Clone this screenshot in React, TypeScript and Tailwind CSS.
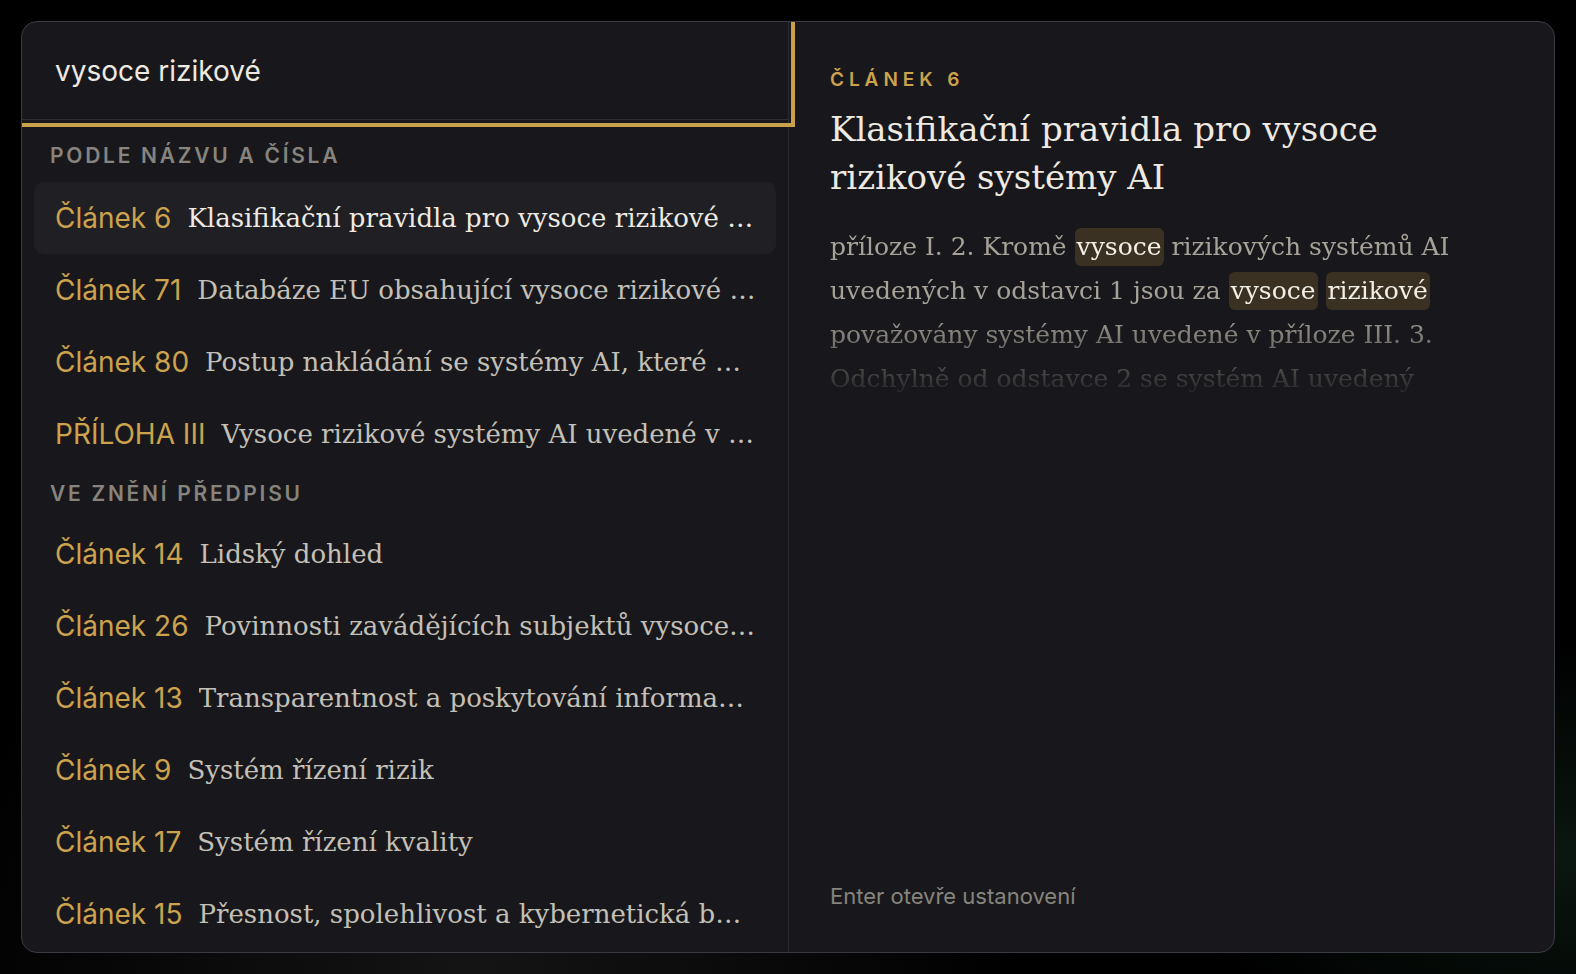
import { useState } from "react";

interface Provision {
  id: string;
  label: string;
  title: string;
}

// results matched by name / number
const byTitle: Provision[] = [
  { id: "a6", label: "Článek 6", title: "Klasifikační pravidla pro vysoce rizikové systémy AI" },
  { id: "a71", label: "Článek 71", title: "Databáze EU obsahující vysoce rizikové systémy AI uvedené v příloze III" },
  { id: "a80", label: "Článek 80", title: "Postup nakládání se systémy AI, které nejsou poskytovatelem klasifikovány jako vysoce rizikové" },
  { id: "p3", label: "PŘÍLOHA III", title: "Vysoce rizikové systémy AI uvedené v čl. 6 odst. 2" },
];

// results matched in the body text
const byText: Provision[] = [
  { id: "a14", label: "Článek 14", title: "Lidský dohled" },
  { id: "a26", label: "Článek 26", title: "Povinnosti zavádějících subjektů vysoce rizikových systémů AI" },
  { id: "a13", label: "Článek 13", title: "Transparentnost a poskytování informací zavádějícím subjektům" },
  { id: "a9", label: "Článek 9", title: "Systém řízení rizik" },
  { id: "a17", label: "Článek 17", title: "Systém řízení kvality" },
  { id: "a15", label: "Článek 15", title: "Přesnost, spolehlivost a kybernetická bezpečnost" },
];

const serif = "font-['DejaVu_Serif','Liberation_Serif',serif]";

function Hit({ children }: { children: string }) {
  return (
    <span className="inline-block rounded-[6px] bg-[#3a3122] px-[2px] leading-[38px] text-[#f3efe6]">
      {children}
    </span>
  );
}

function Row({ item, active, onPick }: { item: Provision; active: boolean; onPick: () => void }) {
  return (
    <button
      onClick={onPick}
      className={`flex h-[72px] w-full items-center gap-4 rounded-[10px] pl-[21px] pr-5 text-left ${
        active ? "bg-[#1f1f24]" : ""
      }`}
    >
      <span className="shrink-0 text-[28px] text-[#cda24d]">{item.label}</span>
      <span
        className={`min-w-0 truncate text-[26px] ${serif} ${active ? "text-[#eeeae2]" : "text-[#c4c0b7]"}`}
      >
        {item.title}
      </span>
    </button>
  );
}

function GroupLabel({ children }: { children: string }) {
  return (
    <div className="flex h-12 items-center pl-4 text-[21px] font-semibold tracking-[0.13em] text-[#86847c]">
      {children}
    </div>
  );
}

export default function App() {
  const [query, setQuery] = useState("vysoce rizikové");
  const [selected, setSelected] = useState("a6");

  return (
    <div className="min-h-screen bg-black bg-[radial-gradient(ellipse_at_30%_100%,#141414_0%,transparent_35%),radial-gradient(ellipse_at_100%_88%,#0a1710_0%,transparent_18%)] p-[21px] font-['Inter',sans-serif]">
      <div className="grid h-[932px] grid-cols-[767px_1fr] overflow-hidden rounded-[16px] border border-[#3a3a42] bg-[#18181c]">
        {/* left: search + results */}
        <div className="flex min-h-0 flex-col border-r border-[#2a2a30]">
          <div className="flex h-[98px] shrink-0 items-center border-b border-[#2e2e35] pl-[33px] outline-4 outline-offset-[3px] outline-[#c9a14a]">
            <input
              value={query}
              onChange={(e) => setQuery(e.target.value)}
              className="w-full bg-transparent text-[28px] text-[#eeeae2] outline-none"
            />
          </div>
          <div className="min-h-0 flex-1 overflow-hidden px-3 pt-3">
            <GroupLabel>PODLE NÁZVU A ČÍSLA</GroupLabel>
            <div className="mt-0.5">
              {byTitle.map((p) => (
                <Row key={p.id} item={p} active={selected === p.id} onPick={() => setSelected(p.id)} />
              ))}
            </div>
            <GroupLabel>VE ZNĚNÍ PŘEDPISU</GroupLabel>
            {byText.map((p) => (
              <Row key={p.id} item={p} active={selected === p.id} onPick={() => setSelected(p.id)} />
            ))}
          </div>
        </div>

        {/* right: preview of the selected provision */}
        <div className="flex min-h-0 flex-col px-[41px] pt-[46px] pb-[42px]">
          <div className="text-[19px] leading-6 font-semibold tracking-[0.26em] text-[#cda24d]">ČLÁNEK 6</div>
          <h2 className={`mt-[13px] text-[34px] leading-[48px] text-[#eeeae2] ${serif}`}>
            Klasifikační pravidla pro vysoce
            <br />
            rizikové systémy AI
          </h2>
          <p
            className={`mt-6 h-[176px] overflow-hidden text-[25px] leading-[44px] text-[#a6a298] [mask-image:linear-gradient(to_bottom,black_50%,transparent_100%)] ${serif}`}
          >
            příloze I. 2. Kromě <Hit>vysoce</Hit> rizikových systémů AI
            <br />
            uvedených v odstavci 1 jsou za <Hit>vysoce</Hit> <Hit>rizikové</Hit>
            <br />
            považovány systémy AI uvedené v příloze III. 3.
            <br />
            Odchylně od odstavce 2 se systém AI uvedený
          </p>
          <div className="mt-auto text-[22px] leading-7 text-[#86847c]">Enter otevře ustanovení</div>
        </div>
      </div>
    </div>
  );
}
